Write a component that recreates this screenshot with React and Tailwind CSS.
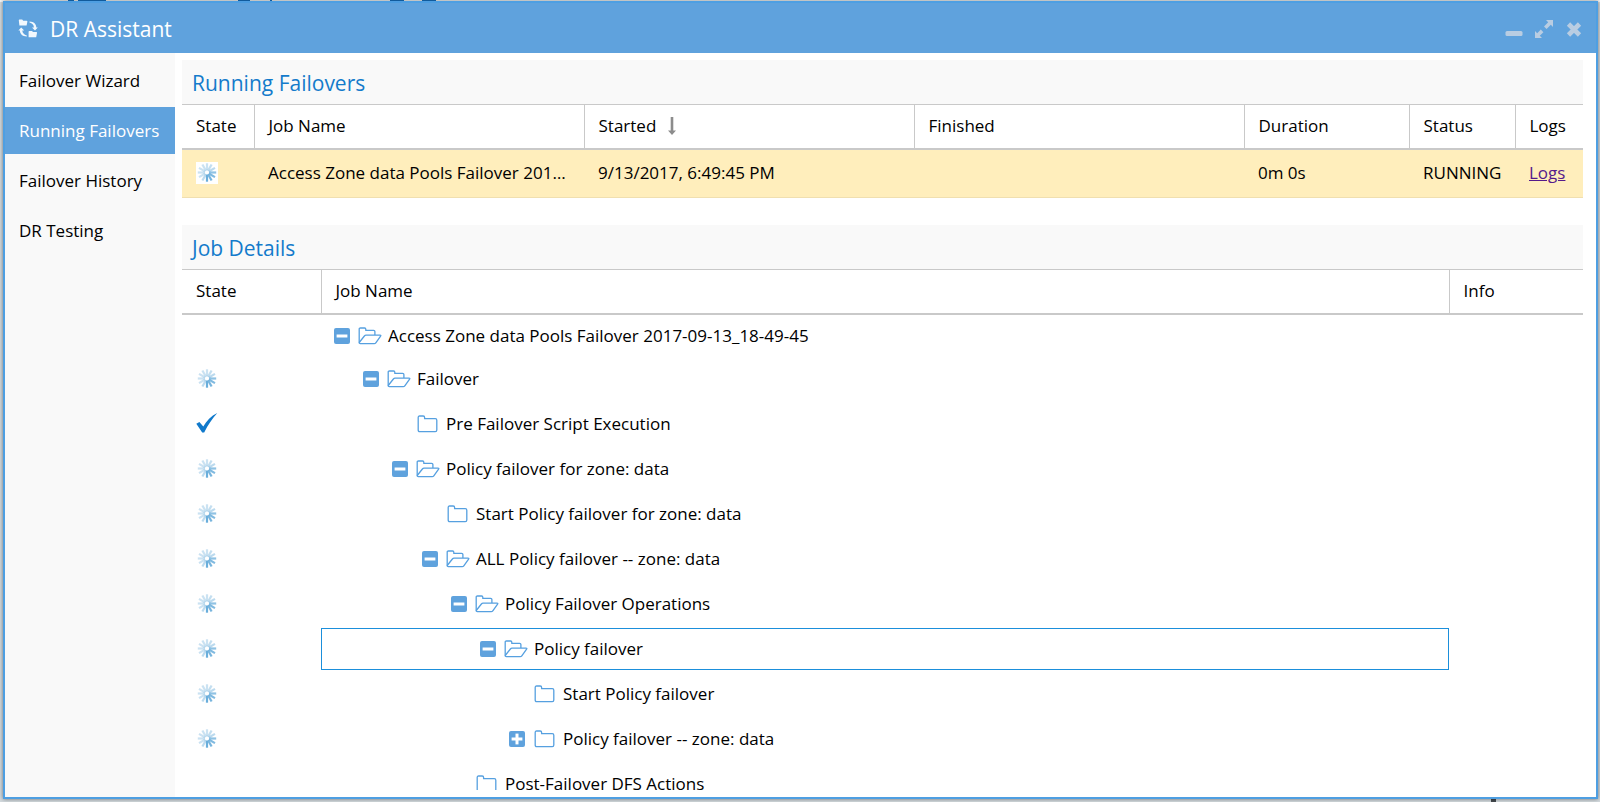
const sideItems = ["Failover Wizard", "Running Failovers", "Failover History", "DR Testing"];

const treeRows = [
  { state: "", level: 0, toggle: "minus", folder: "open", label: "Access Zone data Pools Failover 2017-09-13_18-49-45" },
  { state: "busy", level: 1, toggle: "minus", folder: "open", label: "Failover" },
  { state: "done", level: 2, toggle: "", folder: "closed", label: "Pre Failover Script Execution" },
  { state: "busy", level: 2, toggle: "minus", folder: "open", label: "Policy failover for zone: data" },
  { state: "busy", level: 3, toggle: "", folder: "closed", label: "Start Policy failover for zone: data" },
  { state: "busy", level: 3, toggle: "minus", folder: "open", label: "ALL Policy failover -- zone: data" },
  { state: "busy", level: 4, toggle: "minus", folder: "open", label: "Policy Failover Operations" },
  { state: "busy", level: 5, toggle: "minus", folder: "open", label: "Policy failover", focused: true },
  { state: "busy", level: 6, toggle: "", folder: "closed", label: "Start Policy failover" },
  { state: "busy", level: 6, toggle: "plus", folder: "closed", label: "Policy failover -- zone: data" },
  { state: "", level: 4, toggle: "", folder: "closed", label: "Post-Failover DFS Actions" },
];

const indents = ["w-0", "w-[29px]", "w-[58px]", "w-[88px]", "w-[117px]", "w-[146px]", "w-[175px]"];

const spokes = [0.35, 0.4, 0.45, 0.75, 0.85, 0.9, 1, 0.45, 0.35, 0.35, 0.35, 0.35].map((opacity, i) => ({
  opacity,
  angle: i * 30,
}));

function Spinner() {
  return (
    <svg viewBox="0 0 22 22" className="block size-[22px] shrink-0 bg-white" role="img" aria-label="Running">
      {spokes.map((s) => (
        <line
          key={s.angle}
          x1="11"
          y1="8.400"
          x2="11"
          y2="1.300"
          stroke="#6aaedb"
          strokeWidth="2.200"
          opacity={s.opacity}
          transform={`rotate(${s.angle} 11 10.500)`}
        />
      ))}
    </svg>
  );
}

function Check() {
  return (
    <svg viewBox="0 0 22 22" className="block size-[22px] shrink-0" role="img" aria-label="Done">
      <path d="M.3 10.800 3.400 9 7.300 13.500C10.500 8 15 3 21.300 0 16.500 5.500 11.800 12 8.200 19.600L6.200 19.600Z" fill="#1079cb" />
    </svg>
  );
}

function Folder({ kind }) {
  return (
    <svg viewBox="0 0 24 18" className="block h-[18px] w-6 shrink-0" fill="none" stroke="#56a0e0" strokeWidth="1.300" strokeLinejoin="round" aria-hidden="true">
      {kind === "open" ? (
        <>
          <path d="M1.200 15.500V2.200Q1.200 1 2.400 1H6.600Q7.800 1 7.800 2.200V3.400H15.600Q16.900 3.400 16.900 4.600V8" />
          <path d="M1.200 15.500 6.400 9Q7.100 8.200 8 8.200H22Q23.300 8.200 22.600 9.100L17.800 15.800Q17.200 16.600 16.200 16.600H2.300Q1.200 16.600 1.200 15.500Z" />
        </>
      ) : (
        <path d="M2.200 15V2.400Q2.200 1 3.600 1H7.200Q8.600 1 8.600 2.400V3.700H19.300Q20.800 3.700 20.800 5.200V15Q20.800 16.600 19.300 16.600H3.700Q2.200 16.600 2.200 15Z" />
      )}
    </svg>
  );
}

function Toggle({ kind }) {
  if (!kind) return <span className="size-4 shrink-0" />;
  return (
    <button type="button" aria-label={kind === "plus" ? "Expand" : "Collapse"} className="size-4 shrink-0">
      <svg viewBox="0 0 16 16" className="block size-4">
        <rect width="16" height="16" rx="2" fill="#5fa2dd" />
        <rect x="2.600" y="6.500" width="10.800" height="3" fill="#fff" />
        {kind === "plus" && <rect x="6.500" y="2.600" width="3" height="10.800" fill="#fff" />}
      </svg>
    </button>
  );
}

const th = "border-r border-[#c9c9c9] px-[14px] text-left font-normal last:border-r-0";
const td = "px-[14px]";
const headRow = "h-11 border-t border-b-2 border-[#c9c9c9]";
const sectionTitle = "flex h-11 shrink-0 items-center bg-[#f9f9f9] pt-[2px] pl-[10px] text-[21px] text-[#147bcb]";

function Backdrop() {
  return (
    <svg className="absolute inset-0 -z-10 size-full" aria-hidden="true">
      <rect width="100%" height="2" fill="#f4f6f7" />
      <g fill="#1673c4">
        <rect x="68" width="6" height="2" />
        <rect x="78" width="28" height="2" />
        <rect x="238" width="12" height="2" />
        <rect x="270" width="2" height="2" />
        <rect x="390" width="14" height="2" />
        <rect x="422" width="14" height="2" />
      </g>
      <svg x="100%" y="100%" overflow="visible">
        <rect x="-109" y="-3" width="5" height="3" fill="#444a4e" />
      </svg>
    </svg>
  );
}

export default function App() {
  return (
    <div className="relative isolate flex h-screen flex-col bg-[#d3dade] pt-px pr-[2px] pb-[3px] pl-[3px] font-['Open_Sans',sans-serif] text-[17px] leading-6 text-black">
      <Backdrop />
      <div className="flex min-h-0 flex-1 flex-col border-2 border-[#4e9fe2] bg-white shadow-[0_0_4px_rgba(0,0,0,0.5)]">
        <header className="flex h-[50px] shrink-0 items-center bg-[#5fa2dd] pt-[2px] pr-[13px] pl-[13px] text-white">
          <svg viewBox="0 0 20 20" className="block size-5 shrink-0" fill="#f2f8fd" aria-hidden="true">
            <path d="M.8 1.300Q.8.600 1.500.6H4.200L5.200 1.700H8.600Q9.400 1.700 9.400 2.500L8.600 6.600H1.400Z" />
            <path d="M10.600 12.600Q10.600 12 11.300 12H14L15 13.100H18.800L19 14 18.200 18.300H10.600Z" />
            <path d="M11.500 2.400C16 2.600 18.300 5 18.300 8.400H19.800L17 11.600 14 8.400H15.900C15.800 6 14.200 4.200 11.500 3.600Z" />
            <path d="M8.800 17.600C4.300 17.400 1.900 15 1.900 11.600H.4L3.200 8.400 6.200 11.600H4.300C4.400 14 6 15.800 8.800 16.400Z" />
          </svg>
          <h1 className="ml-3 flex-1 text-[21px]">DR Assistant</h1>
          <div className="flex items-center gap-[11px] text-[#b9cde2]">
            <button type="button" aria-label="Minimize">
              <svg viewBox="0 0 18 20" className="block h-5 w-[18px]" fill="currentColor"><rect x=".5" y="12" width="17" height="5" rx="1.500" /></svg>
            </button>
            <button type="button" aria-label="Maximize">
              <svg viewBox="0 0 20 20" className="block size-5" fill="currentColor">
                <path d="M12 1H19V8L16.800 5.800 12.600 10 10 7.400 14.200 3.200Z" />
                <path d="M8 19H1V12L3.200 14.200 6.800 10.600 9.400 13.200 5.800 16.800Z" />
              </svg>
            </button>
            <button type="button" aria-label="Close">
              <svg viewBox="0 0 18 20" className="block h-5 w-[18px]" stroke="currentColor" strokeWidth="4.600" fill="none"><path d="M3.500 5 14.500 16M14.500 5 3.500 16" /></svg>
            </button>
          </div>
        </header>
        <div className="flex min-h-0 flex-1">
          <nav className="flex w-[170px] shrink-0 flex-col gap-[3px] bg-[#f9f9f9] pt-1">
            {sideItems.map((item) => (
              <a
                key={item}
                href="#"
                aria-current={item === "Running Failovers" ? "page" : undefined}
                className="flex h-[47px] items-center pl-[14px] whitespace-nowrap aria-[current=page]:bg-[#5fa2dd] aria-[current=page]:text-white"
              >
                {item}
              </a>
            ))}
          </nav>
          <main className="flex min-w-0 flex-1 flex-col gap-[27px] pt-[7px] pr-[13px] pb-[7px] pl-[7px]">
            <section className="shrink-0">
              <h2 className={sectionTitle}>Running Failovers</h2>
              <table className="w-full table-fixed border-collapse">
                <colgroup>
                  <col className="w-[72px]" />
                  <col />
                  <col />
                  <col />
                  <col className="w-[165px]" />
                  <col className="w-[106px]" />
                  <col className="w-[68px]" />
                </colgroup>
                <thead>
                  <tr className={headRow}>
                    <th className={th}>State</th>
                    <th className={th}>Job Name</th>
                    <th className={th}>
                      <span className="flex items-center gap-3">
                        Started
                        <svg viewBox="0 0 8 18" className="block h-[18px] w-2" fill="#8c8c8c" aria-hidden="true"><path d="M2.700 0H5.300V13.500H8L4 18 0 13.500H2.700Z" /></svg>
                      </span>
                    </th>
                    <th className={th}>Finished</th>
                    <th className={th}>Duration</th>
                    <th className={th}>Status</th>
                    <th className={th}>Logs</th>
                  </tr>
                </thead>
                <tbody>
                  <tr className="h-[49px] border-b border-[#f0dfb0] bg-[#ffeebc]">
                    <td className={td}><Spinner /></td>
                    <td className="truncate pr-3 pl-[14px]">Access Zone data Pools Failover 2017-09-13_18-49-45</td>
                    <td className={td}>9/13/2017, 6:49:45 PM</td>
                    <td className={td}></td>
                    <td className={td}>0m 0s</td>
                    <td className="pl-[14px]">RUNNING</td>
                    <td className={td}><a href="#" className="text-[#551a8b] underline">Logs</a></td>
                  </tr>
                </tbody>
              </table>
            </section>
            <section className="flex min-h-0 flex-1 flex-col overflow-hidden">
              <h2 className={sectionTitle}>Job Details</h2>
              <table className="w-full table-fixed border-collapse">
                <colgroup>
                  <col className="w-[139px]" />
                  <col />
                  <col className="w-[134px]" />
                </colgroup>
                <thead>
                  <tr className={headRow}>
                    <th className={th}>State</th>
                    <th className={th}>Job Name</th>
                    <th className={th}>Info</th>
                  </tr>
                </thead>
                <tbody>
                  {treeRows.map((row, i) => (
                    <tr key={i} className={i === 0 ? "h-[43px]" : "h-[45px]"}>
                      <td className={td}>
                        {row.state === "busy" && <Spinner />}
                        {row.state === "done" && <Check />}
                      </td>
                      <td className="p-0">
                        <div className={row.focused ? "flex h-[42px] items-center border border-[#1b8fdb] pl-3" : "flex h-[42px] items-center border border-transparent pl-3"}>
                          <span className={`${indents[row.level]} shrink-0`} />
                          <Toggle kind={row.toggle} />
                          <span className="w-2 shrink-0" />
                          <Folder kind={row.folder} />
                          <span className="ml-[6px] whitespace-nowrap">{row.label}</span>
                        </div>
                      </td>
                      <td></td>
                    </tr>
                  ))}
                </tbody>
              </table>
            </section>
          </main>
        </div>
      </div>
    </div>
  );
}
